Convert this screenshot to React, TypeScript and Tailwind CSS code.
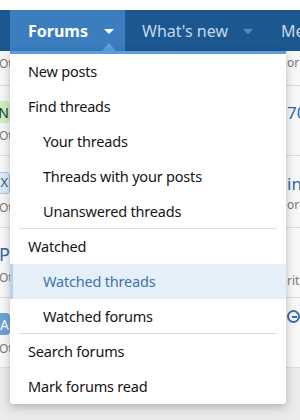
import { ReactNode } from 'react'

interface MenuItem {
  label: string
  indent?: boolean
  active?: boolean
  divider?: boolean
}

const menuItems: MenuItem[] = [
  { label: 'New posts' },
  { label: 'Find threads' },
  { label: 'Your threads', indent: true },
  { label: 'Threads with your posts', indent: true },
  { label: 'Unanswered threads', indent: true, divider: true },
  { label: 'Watched' },
  { label: 'Watched threads', indent: true, active: true },
  { label: 'Watched forums', indent: true, divider: true },
  { label: 'Search forums' },
  { label: 'Mark forums read' },
]

function Caret({ className }: { className: string }) {
  return (
    <svg width="10" height="5" viewBox="0 0 10 5" className={className}>
      <path d="M0 0 L10 0 L5 5 Z" fill="currentColor" />
    </svg>
  )
}

// a background row: only its left and right edges peek out beside the menu
function Row({ height, left, right }: { height: string; left: ReactNode; right: ReactNode }) {
  return (
    <div className={`${height} flex border-b border-[#dcdcdc] bg-[#f7f7f7]`}>
      <div className="w-[10px] overflow-hidden">{left}</div>
      <div className="flex-1" />
      <div className="w-[14px] overflow-hidden pl-px">{right}</div>
    </div>
  )
}

export default function App() {
  return (
    <div className="relative w-[300px] h-[420px] overflow-hidden bg-[#ebebeb] font-['Noto_Sans',sans-serif]">
      {/* top strip */}
      <div className="h-[10px] bg-white" />

      {/* nav bar */}
      <div className="h-[41px] flex bg-[#1d5790] pl-[10px] overflow-hidden">
        <div className="relative shrink-0 w-[115px] flex items-center pl-[18px] bg-[#3c7dbf]">
          <span className="text-[16px] font-bold text-white">Forums</span>
          <Caret className="ml-[16px] mt-px text-white" />
          <div className="absolute left-[92px] bottom-0 w-0 h-0 border-l-[7px] border-r-[7px] border-b-[8px] border-l-transparent border-r-transparent border-b-[#5ea0e2]" />
        </div>
        <div className="shrink-0 flex items-center pl-[17px] text-[16px] text-[#c3d8ee] whitespace-nowrap">
          <span>What's new</span>
          <Caret className="ml-[15px] mt-px text-[#5c8cc0]" />
          <span className="ml-[28px]">Media</span>
        </div>
      </div>

      {/* background list */}
      <div>
        <Row
          height="h-[35px]"
          left={<div className="pt-[4px] -ml-px text-[12px] text-[#7a7a7a]">Ot</div>}
          right={<div className="pt-[3px] text-[12px] text-[#7a7a7a]">or</div>}
        />
        <Row
          height="h-[70px]"
          left={
            <div className="pt-[15px]">
              <div className="-ml-[14px] w-[24px] h-[22px] rounded-[4px] bg-[#cdeec3] flex items-center justify-end pr-px text-[14px] text-[#1e3a12]">N</div>
              <div className="mt-[4px] -ml-px text-[12px] text-[#7a7a7a]">Ot</div>
            </div>
          }
          right={<div className="pt-[14px] text-[17px] text-[#2a6aa7]">70</div>}
        />
        <Row
          height="h-[72px]"
          left={
            <div className="pt-[16px]">
              <div className="-ml-[14px] w-[24px] h-[22px] rounded-[4px] border border-[#a8c4e2] bg-[#dfeaf6] flex items-center justify-end pr-px text-[13px] text-[#2a5a8e]">X</div>
              <div className="mt-[5px] -ml-px text-[12px] text-[#7a7a7a]">Ot</div>
            </div>
          }
          right={
            <div className="pt-[16px]">
              <div className="text-[17px] leading-[24px] text-[#2a6aa7]">in</div>
              <div className="text-[12px] text-[#7a7a7a]">or</div>
            </div>
          }
        />
        <Row
          height="h-[70px]"
          left={
            <div className="pt-[14px]">
              <div className="-ml-px text-[18px] leading-[24px] text-[#2a6aa7]">P</div>
              <div className="mt-[3px] -ml-px text-[12px] text-[#7a7a7a]">Ot</div>
            </div>
          }
          right={<div className="pt-[44px] text-[12px] text-[#7a7a7a]">riti</div>}
        />
        <Row
          height="h-[70px]"
          left={
            <div className="pt-[15px]">
              <div className="-ml-[14px] w-[24px] h-[22px] rounded-[4px] bg-[#6ea3d8] flex items-center justify-end pr-px text-[14px] text-white">A</div>
              <div className="mt-[5px] -ml-px text-[12px] text-[#7a7a7a]">Ot</div>
            </div>
          }
          right={
            <div className="pt-[12px]">
              <div className="w-[13px] h-[13px] rounded-full border-2 border-[#3d6fa6] flex items-center">
                <div className="ml-[3px] w-[5px] h-[2px] bg-[#3d6fa6]" />
              </div>
            </div>
          }
        />
      </div>

      {/* dropdown menu */}
      <div className="absolute left-[10px] top-[51px] w-[276px] bg-white border-t-[3px] border-[#5b9de0] rounded-b-[3px] shadow-[0_3px_10px_rgba(0,0,0,0.25)]">
        {menuItems.map((item) => (
          <div key={item.label} className={item.divider ? 'px-[9px]' : ''}>
            <div
              className={`h-[35px] flex items-center text-[14.5px] tracking-[-0.2px] whitespace-nowrap ${
                item.divider ? '-mx-[9px] ' : ''
              }${
                item.active
                  ? 'bg-[#e5f0fb] border-l-[3px] border-[#b3d2ee] text-[#3f74ab] pl-[30px]'
                  : item.indent
                  ? 'text-[#141414] pl-[33px]'
                  : 'text-[#141414] pl-[18px]'
              }`}
            >
              {item.label}
            </div>
            {item.divider && <div className="-mt-px h-px bg-[#e0e0e0]" />}
          </div>
        ))}
      </div>
    </div>
  )
}
